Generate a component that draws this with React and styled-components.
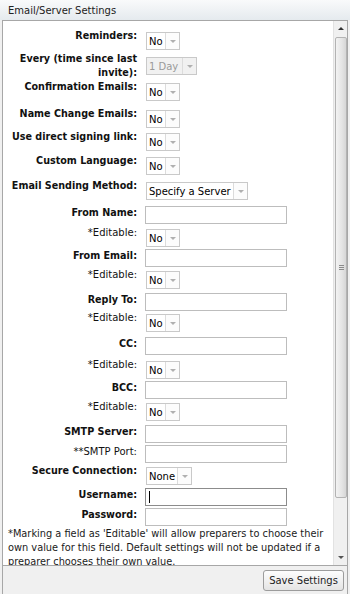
import React from 'react';
import styled, { createGlobalStyle } from 'styled-components';

const GlobalStyle = createGlobalStyle`
  html, body {
    margin: 0;
    padding: 0;
    background: #f0f0f0;
  }
  body {
    font-family: "DejaVu Sans", Verdana, sans-serif;
    font-size: 10px;
    color: #1a1a1a;
  }
`;

const Window = styled.div`
  width: 350px;
  height: 594px;
  display: flex;
  flex-direction: column;
  background: #f0f0f0;
  overflow: hidden;
`;

const TitleBar = styled.div`
  height: 20px;
  line-height: 21px;
  padding-left: 8px;
  font-size: 10px;
  color: #222;
  background: linear-gradient(#f9fafb, #e5eaee);
`;

const Frame = styled.div`
  flex: 1;
  display: flex;
  flex-direction: column;
  margin: 0 2px;
  border-left: 1px solid #a7a7a7;
  border-right: 1px solid #a7a7a7;
  min-height: 0;
`;

const Panel = styled.div`
  height: 544px;
  display: flex;
  background: #fff;
  border-top: 1px solid #a7a7a7;
  border-bottom: 1px solid #a7a7a7;
  overflow: hidden;
`;

const FormArea = styled.div`
  flex: 1;
  padding-top: 8px;
  min-width: 0;
`;

const Row = styled.div`
  display: grid;
  grid-template-columns: 134px auto;
  column-gap: 9px;
  align-items: start;
  height: ${p => p.$h}px;
`;

const Label = styled.div`
  text-align: right;
  line-height: 14px;
  font-size: ${p => (p.$plain ? '10px' : '9.6px')};
  font-weight: ${p => (p.$plain ? 'normal' : 'bold')};
  color: #111;
  margin-top: ${p => p.$mt || 0}px;
`;

const SelectBox = styled.div`
  display: inline-flex;
  box-sizing: border-box;
  width: ${p => p.$w}px;
  height: 18px;
  margin-top: 3px;
  border: 1px solid #c9c9c9;
  background: ${p => (p.$disabled ? '#f1f1f1' : '#fff')};
`;

const SelectValue = styled.span`
  flex: 1;
  padding-left: 2px;
  line-height: 17px;
  white-space: nowrap;
  color: ${p => (p.$disabled ? '#9a9a9a' : '#000')};
`;

const ArrowCell = styled.span`
  width: 13px;
  display: flex;
  align-items: center;
  justify-content: center;
  border-left: 1px solid #dcdcdc;
  background: ${p => (p.$disabled ? '#f1f1f1' : '#fcfcfc')};

  &::after {
    content: '';
    border-left: 3px solid transparent;
    border-right: 3px solid transparent;
    border-top: 3px solid #b0b0b0;
    margin-top: 1px;
  }
`;

const TextBox = styled.div`
  position: relative;
  box-sizing: border-box;
  width: 142px;
  height: 18px;
  margin-top: 3px;
  margin-left: -1px;
  border: 1px solid ${p => (p.$focus ? '#8c8c8c' : '#bdbdbd')};
  background: #fff;
`;

const Caret = styled.span`
  position: absolute;
  left: 3px;
  top: 2px;
  width: 1px;
  height: 12px;
  background: #000;
`;

const Note = styled.div`
  padding: 0 0 0 5px;
  font-size: 9.8px;
  line-height: 14px;
  color: #1a1a1a;
`;

const Scrollbar = styled.div`
  width: 13px;
  display: flex;
  flex-direction: column;
  background: #f0f0f0;
  border-left: 1px solid #e2e2e2;
`;

const ScrollButton = styled.div`
  height: 15px;
  display: flex;
  align-items: center;
  justify-content: center;

  &::after {
    content: '';
    border-left: 3px solid transparent;
    border-right: 3px solid transparent;
    ${p => (p.$down ? 'border-top: 3px solid #555;' : 'border-bottom: 3px solid #333;')}
  }
`;

const Track = styled.div`
  flex: 1;
  display: flex;
  flex-direction: column;
  padding: 1px 0 0 1px;
`;

const Thumb = styled.div`
  height: 461px;
  box-sizing: border-box;
  border: 1px solid #b3b3b3;
  border-radius: 2px;
  background: linear-gradient(to right, #f3f3f3, #e4e4e4 60%, #d6d6d6);
  display: flex;
  flex-direction: column;
  align-items: center;
  justify-content: center;
  gap: 1px;
`;

const GripLine = styled.span`
  width: 5px;
  height: 1px;
  background: #8a8a8a;
`;

const Footer = styled.div`
  flex: 1;
  display: flex;
  align-items: center;
  justify-content: flex-end;
  padding-right: 3px;
  background: #f0f0f0;
`;

const Button = styled.button`
  height: 21px;
  width: 81px;
  padding: 0;
  font-family: "DejaVu Sans", Verdana, sans-serif;
  font-size: 10px;
  color: #222;
  border: 1px solid #9c9c9c;
  border-radius: 3px;
  background: linear-gradient(#fdfdfd, #e4e4e4);
`;

function Select({ value, width, disabled }) {
  return (
    <SelectBox $w={width} $disabled={disabled}>
      <SelectValue $disabled={disabled}>{value}</SelectValue>
      <ArrowCell $disabled={disabled} />
    </SelectBox>
  );
}

const rows = [
  { label: 'Reminders:', h: 25, select: 'No' },
  { label: 'Every (time since last invite):', h: 26, select: '1 Day', w: 51, disabled: true, mt: -2 },
  { label: 'Confirmation Emails:', h: 27, select: 'No' },
  { label: 'Name Change Emails:', h: 23, select: 'No' },
  { label: 'Use direct signing link:', h: 24, select: 'No' },
  { label: 'Custom Language:', h: 25, select: 'No' },
  { label: 'Email Sending Method:', h: 24, select: 'Specify a Server', w: 102 },
  { label: 'From Name:', h: 23 },
  { label: '*Editable:', h: 20, select: 'No', plain: true },
  { label: 'From Email:', h: 22 },
  { label: '*Editable:', h: 22, select: 'No', plain: true },
  { label: 'Reply To:', h: 21 },
  { label: '*Editable:', h: 23, select: 'No', plain: true },
  { label: 'CC:', h: 24 },
  { label: '*Editable:', h: 20, select: 'No', plain: true },
  { label: 'BCC:', h: 22 },
  { label: '*Editable:', h: 22, select: 'No', plain: true },
  { label: 'SMTP Server:', h: 20 },
  { label: '**SMTP Port:', h: 22, plain: true },
  { label: 'Secure Connection:', h: 21, select: 'None', w: 46 },
  { label: 'Username:', h: 20, focus: true },
  { label: 'Password:', h: 22 },
];

export default function App() {
  return (
    <Window>
      <GlobalStyle />
      <TitleBar>Email/Server Settings</TitleBar>
      <Frame>
        <Panel>
          <FormArea>
            {rows.map((r, i) => (
              <Row key={i} $h={r.h}>
                <Label $plain={r.plain} $mt={r.select ? r.mt : 3}>
                  {r.label}
                </Label>
                {r.select ? (
                  <Select value={r.select} width={r.w || 34} disabled={r.disabled} />
                ) : (
                  <TextBox $focus={r.focus}>{r.focus && <Caret />}</TextBox>
                )}
              </Row>
            ))}
            <Note>
              *Marking a field as 'Editable' will allow preparers to choose their own value
              for this field. Default settings will not be updated if a preparer chooses
              their own value.
            </Note>
          </FormArea>
          <Scrollbar>
            <ScrollButton />
            <Track>
              <Thumb>
                <GripLine />
                <GripLine />
                <GripLine />
              </Thumb>
            </Track>
            <ScrollButton $down />
          </Scrollbar>
        </Panel>
        <Footer>
          <Button>Save Settings</Button>
        </Footer>
      </Frame>
    </Window>
  );
}
